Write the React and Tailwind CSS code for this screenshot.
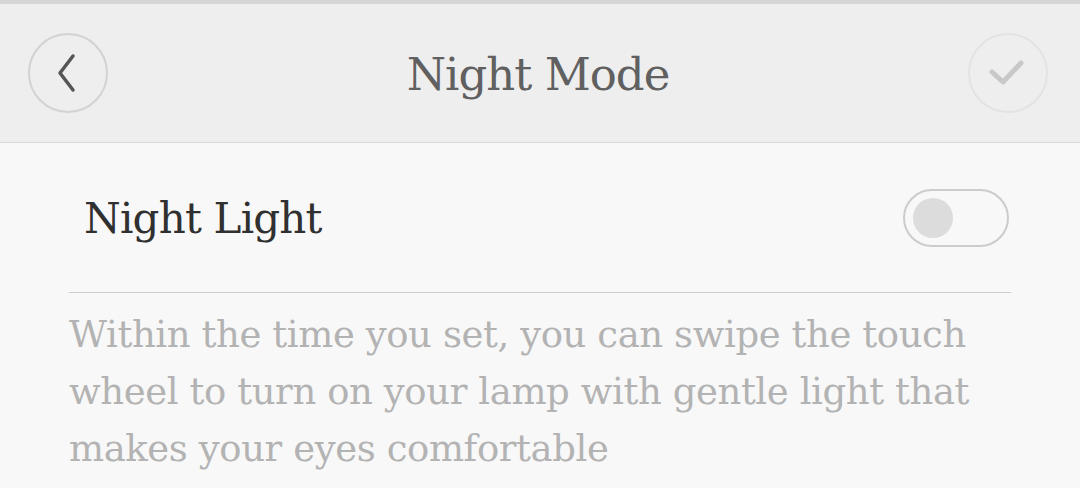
import React, { useState } from 'react';

export default function App() {
  const [on, setOn] = useState(false);

  return (
    <div className="w-[1080px] h-[488px] overflow-hidden bg-[#f8f8f8]" style={{ fontFamily: '"DejaVu Serif", "Liberation Serif", serif' }}>
      {/* status strip */}
      <div className="h-[4px] bg-[#d6d6d6]" />

      {/* HEADER */}
      <div className="h-[139px] bg-[#eeeeee] border-b border-[#d9d9d9] flex items-center justify-between pl-[28px] pr-[32px]">
        <button className="w-[80px] h-[80px] rounded-full border-2 border-[#d2d2d2] flex items-center justify-center">
          <svg width="30" height="40" viewBox="0 0 30 40" fill="none">
            <path d="M20 3 L7 20 L20 37" stroke="#555" strokeWidth="3.5" strokeLinecap="round" strokeLinejoin="round" />
          </svg>
        </button>
        <h1 className="text-[45px] text-[#606060] tracking-[-1px] mt-[3px]">Night Mode</h1>
        <button className="w-[80px] h-[80px] rounded-full border-2 border-[#e3e3e3] flex items-center justify-center">
          <svg width="40" height="30" viewBox="0 0 40 30" fill="none">
            <path d="M4 14 L15 24 L33 5" stroke="#c8c8c8" strokeWidth="5" strokeLinecap="round" strokeLinejoin="round" />
          </svg>
        </button>
      </div>

      {/* SETTING ROW */}
      <div className="mx-[69px]">
        <div className="h-[150px] flex items-center justify-between border-b border-[#cfcfcf] pl-[15px]">
          <span className="text-[42px] text-[#303030] tracking-[-0.8px] mt-[2px]">Night Light</span>
          <button
            onClick={() => setOn(!on)}
            className="w-[106px] h-[58px] rounded-full border-2 border-[#cccccc] flex items-center px-[8px] mr-[2px]">
            <span className="w-[40px] h-[40px] rounded-full bg-[#dcdcdc]" />
          </button>
        </div>

        <p className="mt-[13px] text-[37px] leading-[57px] text-[#b3b3b3] tracking-[-0.4px] w-[930px]">
          Within the time you set, you can swipe the touch wheel to turn on your lamp with gentle light that makes your eyes comfortable
        </p>
      </div>
    </div>
  );
}
